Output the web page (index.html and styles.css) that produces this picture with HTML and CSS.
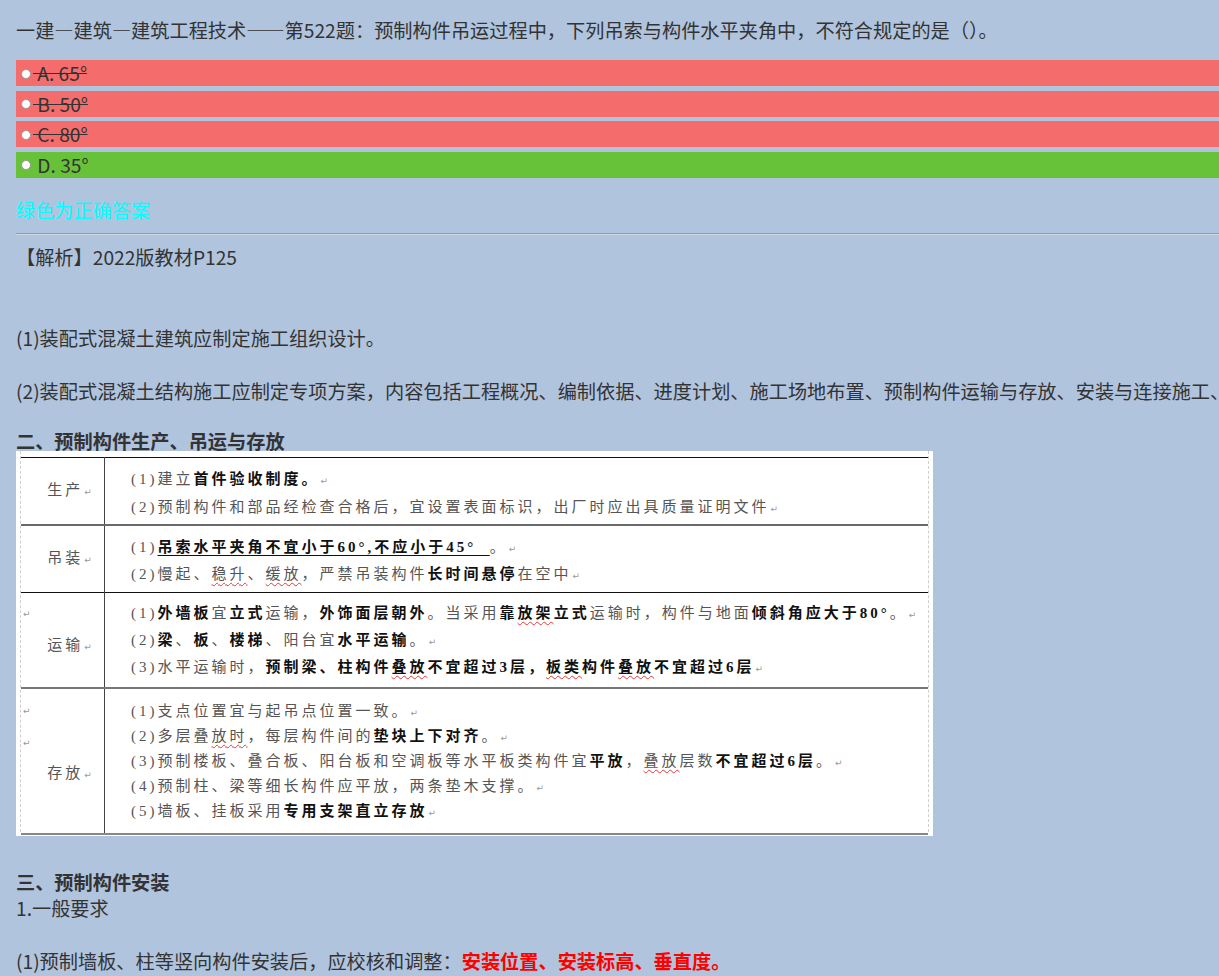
FILE: index.html
```html
<!DOCTYPE html>
<html lang="zh-CN">
  <head>
    <meta charset="UTF-8" />
    <meta name="viewport" content="width=device-width, initial-scale=1.0" />
    <title>一建—建筑—建筑工程技术 第522题</title>
    <link rel="stylesheet" href="styles.css">
  </head>
  <body>
    <div class="page">
      <div class="title">一建—建筑—建筑工程技术——第522题：预制构件吊运过程中，下列吊索与构件水平夹角中，不符合规定的是（）。</div>

      <div class="options">
        <div class="option wrong"><span class="radio"></span><s>&nbsp;A. 65°</s></div>
        <div class="option wrong"><span class="radio"></span><s>&nbsp;B. 50°</s></div>
        <div class="option wrong"><span class="radio"></span><s>&nbsp;C. 80°</s></div>
        <div class="option right"><span class="radio"></span>&nbsp;D. 35°</div>
      </div>

      <div class="answer-note">绿色为正确答案</div>
      <hr class="divider" />

      <div class="analysis">
        <p class="line">【解析】2022版教材P125</p>
        <p class="line gap-2">(1)装配式混凝土建筑应制定施工组织设计。</p>
        <p class="line gap-1 long">(2)装配式混凝土结构施工应制定专项方案，内容包括工程概况、编制依据、进度计划、施工场地布置、预制构件运输与存放、安装与连接施工、绿色施工、安全管理、质量管理、信息化管理、应急预案等。</p>

        <p class="section first">二、预制构件生产、吊运与存放</p>

        <div class="doc">
          <div class="doc-inner">
            <table class="doc-table">
              <tr class="r1">
                <td class="label"><div class="lab">生产<span class="pm">↵</span></div></td>
                <td class="body">
                  <div>(1)建立<b>首件验收制度。</b><span class="pm">↵</span></div>
                  <div>(2)预制构件和部品经检查合格后，宜设置表面标识，出厂时应出具质量证明文件<span class="pm">↵</span></div>
                </td>
              </tr>
              <tr class="r2">
                <td class="label"><div class="lab">吊装<span class="pm">↵</span></div></td>
                <td class="body">
                  <div>(1)<b class="under">吊索水平夹角不宜小于60°,不应小于45°&nbsp;&nbsp;</b>。<span class="pm">↵</span></div>
                  <div>(2)慢起、<span class="wavy">稳升</span>、<span class="wavy">缓放</span>，严禁吊装构件<b>长时间悬停</b>在空中<span class="pm">↵</span></div>
                </td>
              </tr>
              <tr class="r3">
                <td class="label top">
                  <div class="mark"><span class="pm">↵</span></div>
                  <div class="lab">运输<span class="pm">↵</span></div>
                </td>
                <td class="body">
                  <div>(1)<b>外墙板</b>宜<b>立式</b>运输，<b>外饰面层朝外</b>。当采用<b>靠<span class="wavy">放架</span>立式</b>运输时，构件与地面<b>倾斜角应大于80°</b>。<span class="pm">↵</span></div>
                  <div>(2)<b>梁</b>、<b>板</b>、<b>楼梯</b>、阳台宜<b>水平运输</b>。<span class="pm">↵</span></div>
                  <div>(3)水平运输时，<b>预制梁、柱构件<span class="wavy">叠放</span>不宜超过3层，<span class="wavy">板类</span>构件<span class="wavy">叠放</span>不宜超过6层</b><span class="pm">↵</span></div>
                </td>
              </tr>
              <tr class="r4">
                <td class="label top">
                  <div class="mark"><span class="pm">↵</span></div>
                  <div class="mark"><span class="pm">↵</span></div>
                  <div class="lab">存放<span class="pm">↵</span></div>
                </td>
                <td class="body">
                  <div>(1)支点位置宜与起吊点位置一致。<span class="pm">↵</span></div>
                  <div>(2)多层叠<span class="wavy">放时</span>，每层构件间的<b>垫块上下对齐</b>。<span class="pm">↵</span></div>
                  <div>(3)预制楼板、叠合板、阳台板和空调板等水平板类构件宜<b>平放</b>，<span class="wavy">叠放</span>层数<b>不宜超过6层</b>。<span class="pm">↵</span></div>
                  <div>(4)预制柱、梁等细长构件应平放，两条垫木支撑。<span class="pm">↵</span></div>
                  <div>(5)墙板、挂板采用<b>专用支架直立存放</b><span class="pm">↵</span></div>
                </td>
              </tr>
            </table>
          </div>
        </div>

        <p class="section second">三、预制构件安装</p>
        <p class="line tight">1.一般要求</p>
        <p class="line gap-1">(1)预制墙板、柱等竖向构件安装后，应校核和调整：<strong class="red">安装位置、安装标高、垂直度。</strong></p>
      </div>
    </div>
  </body>
</html>
```

FILE: styles.css
```css
html {
  overflow: hidden;
}

body {
  margin: 0;
  background: #b0c4de;
  color: #333;
  font-family: "Noto Sans CJK SC", "Noto Sans", sans-serif;
  font-size: 19.2px;
}

.page {
  width: 1700px;
  padding: 16px;
}

.title {
  line-height: 28px;
  margin-bottom: 16px;
}

/* options */
.options {
  display: flex;
  flex-direction: column;
  gap: 4.6px;
}

.option {
  height: 26px;
  line-height: 26px;
  display: flex;
  align-items: center;
  white-space: pre;
}

.option.wrong {
  background: #f56c6c;
}

.option.right {
  background: #67c23a;
}

.option s {
  text-decoration-thickness: 1px;
}

.radio {
  width: 10px;
  height: 10px;
  box-sizing: border-box;
  border-radius: 50%;
  background: #fff;
  border: 1px solid #9a9a9a;
  margin: 1px 2px 0 5px;
}

.answer-note {
  color: #00ffff;
  line-height: 27px;
  margin-top: 19.7px;
}

.divider {
  border: none;
  border-top: 1px solid #9a9a9a;
  border-bottom: 1px solid #d0d8e4;
  margin: 9px 0 9px 0;
}

/* analysis text */
.analysis p {
  margin: 0;
}

.line {
  line-height: 26px;
}

.gap-2 {
  margin-top: 55px !important;
}

.gap-1 {
  margin-top: 27px !important;
}

.tight {
  margin-top: 2px !important;
}

.long {
  white-space: nowrap;
}

.section {
  font-weight: bold;
  line-height: 20px;
}

.section.first {
  margin-top: 27px;
}

.section.second {
  margin-top: 35px;
  line-height: 22px;
}

.red {
  color: #ff0000;
}

/* scanned table picture */
.doc {
  width: 917px;
  height: 385px;
  box-sizing: border-box;
  background: #fff;
  padding: 0 4px 4px 4px;
}

.doc-inner {
  height: 100%;
  box-sizing: border-box;
  padding-top: 6px;
  border-left: 1px dashed #cfcfcf;
  border-right: 1px dashed #cfcfcf;
}

.doc-table {
  width: 100%;
  border-collapse: collapse;
  font-family: "Liberation Serif", "Noto Sans CJK SC", serif;
  font-size: 15px;
  letter-spacing: 3px;
  color: #555;
}

.doc-table b {
  color: #111;
}

.doc-table td {
  padding: 0;
  vertical-align: middle;
}

.doc-table .body div {
  white-space: nowrap;
  overflow: visible;
}

.doc-table .label {
  width: 83px;
  border-right: 1.5px solid #444;
}

.doc-table .label.top {
  vertical-align: top;
}

.lab {
  padding-left: 14px;
  text-align: center;
}

.mark {
  text-align: left;
  padding-left: 1px;
}

.doc-table .body {
  padding-left: 26px;
}

.pm {
  font-family: "DejaVu Sans", sans-serif;
  font-size: 9px;
  color: #999;
  letter-spacing: 0;
  margin-left: 1px;
}

.under {
  text-decoration: underline;
  text-decoration-color: #111;
  text-underline-offset: 3px;
}

.wavy {
  text-decoration: underline wavy #e23a3a;
  text-decoration-thickness: 1px;
  text-underline-offset: 3px;
}

.r1 td {
  height: 66px;
  border-top: 1px solid #111;
  line-height: 28px;
}

.r1 .body {
  height: 63px;
  padding-top: 3px;
}

.r1 .body div {
  height: 28px;
}

.r2 td {
  height: 66px;
  border-top: 2px solid #6a6a6a;
  line-height: 27px;
}

.r2 .body {
  height: 63px;
  padding-top: 3px;
}

.r2 .body div,
.r3 .body div {
  height: 27px;
}

.r3 td {
  height: 94px;
  border-top: 1.5px solid #111;
  line-height: 27px;
}

.r3 .label {
  height: 91px;
  padding-top: 3px;
  line-height: 33px;
}

.r3 .label div {
  height: 33px;
}

.r4 td {
  height: 144px;
  border-top: 2px solid #777;
  border-bottom: 2px solid #888;
  line-height: 25.2px;
}

.r4 .body div {
  height: 25.2px;
}

.r4 .label {
  height: 140px;
  padding-top: 4px;
  line-height: 32px;
}

.r4 .label div {
  height: 32px;
}
```
